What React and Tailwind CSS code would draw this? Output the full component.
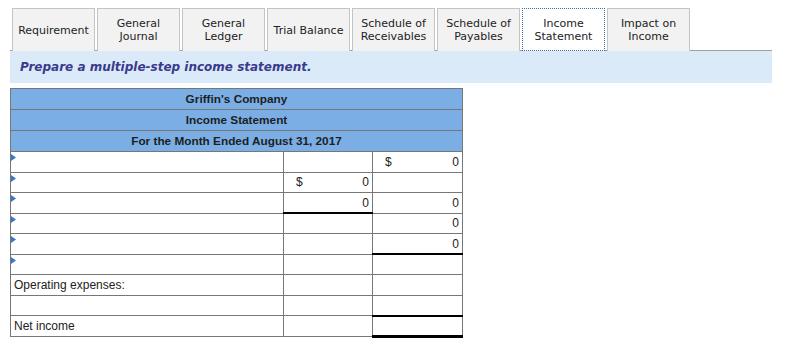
const tabs = [
  ['Requirement'],
  ['General', 'Journal'],
  ['General', 'Ledger'],
  ['Trial Balance'],
  ['Schedule of', 'Receivables'],
  ['Schedule of', 'Payables'],
  ['Income', 'Statement'],
  ['Impact on', 'Income'],
]

// amounts are [symbol, value]; lines mark single / double underlines
const rows = [
  { arrow: true, right: ['$', '0'] },
  { arrow: true, mid: ['$', '0'] },
  { arrow: true, mid: ['', '0'], right: ['', '0'], midLine: 'single' },
  { arrow: true, right: ['', '0'] },
  { arrow: true, right: ['', '0'], rightLine: 'single' },
  { arrow: true },
  { label: 'Operating expenses:' },
  { rightLine: 'single' },
  { label: 'Net income', rightLine: 'double' },
]

function Arrow() {
  return (
    <svg width="5" height="7" viewBox="0 0 5 7" className="absolute left-0 top-[2px]">
      <path d="M0 0 L5 3.5 L0 7 Z" fill="#3c76c8" />
    </svg>
  )
}

function Amount({ value }) {
  if (!value) return null
  return (
    <div className="flex justify-between pl-[12px] pr-[3px]">
      <span>{value[0]}</span>
      <span>{value[1]}</span>
    </div>
  )
}

function lineClass(kind) {
  if (kind === 'single') return 'border-b-2 border-b-black'
  if (kind === 'double') return 'border-b-[3px] border-b-black'
  return 'border-b border-b-[#777]'
}

export default function App() {
  return (
    <div className="w-[803px] h-[345px] bg-white overflow-hidden pt-[8px]">
      <div className="flex gap-[2px] pl-[12px]">
        {tabs.map((t, i) => {
          const active = i === 6
          return (
            <div
              key={i}
              className={
                'w-[83px] h-[43px] flex flex-col items-center justify-center text-[11px] leading-[13px] text-[#222] text-center ' +
                (active
                  ? 'bg-white border border-dotted border-[#3f6aa8] relative z-10'
                  : 'bg-[#f2f2f2] border border-b-0 border-[#c4c4c4]')
              }
              style={{ fontFamily: '"DejaVu Sans", Verdana, sans-serif' }}
            >
              {t.map(l => (
                <div key={l}>{l}</div>
              ))}
            </div>
          )
        })}
      </div>
      <div className="ml-[10px] w-[762px] -mt-[1px] border-t border-[#a0a0a0] bg-[#dbeaf8] h-[33px] flex items-center pl-[10px]">
        <span
          className="text-[12px] font-bold italic text-[#3a3a8c]"
          style={{ fontFamily: '"DejaVu Sans", Verdana, sans-serif' }}
        >
          Prepare a multiple-step income statement.
        </span>
      </div>

      <table
        className="ml-[10px] mt-[5px] border-collapse text-[12px] text-[#222]"
        style={{ fontFamily: '"Liberation Sans", Arial, sans-serif' }}
      >
        <colgroup>
          <col className="w-[273px]" />
          <col className="w-[89px]" />
          <col className="w-[90px]" />
        </colgroup>
        <thead>
          {["Griffin's Company", 'Income Statement', 'For the Month Ended August 31, 2017'].map(h => (
            <tr key={h}>
              <th
                colSpan={3}
                className="h-[21px] p-0 border border-[#777] bg-[#7aaee5] font-bold text-center text-[11.8px] leading-[14px] text-[#1e1e1e]"
              >
                {h}
              </th>
            </tr>
          ))}
        </thead>
        <tbody>
          {rows.map((r, i) => (
            <tr key={i}>
              <td className="relative h-[20.5px] p-0 pl-[3px] border border-[#777] leading-[14px] align-middle">
                {r.arrow && <Arrow />}
                {r.label}
              </td>
              <td className={'h-[20.5px] p-0 border-l border-r border-t border-[#777] ' + lineClass(r.midLine)}>
                <Amount value={r.mid} />
              </td>
              <td className={'h-[20.5px] p-0 border-l border-r border-t border-[#777] ' + lineClass(r.rightLine)}>
                <Amount value={r.right} />
              </td>
            </tr>
          ))}
        </tbody>
      </table>
    </div>
  )
}
